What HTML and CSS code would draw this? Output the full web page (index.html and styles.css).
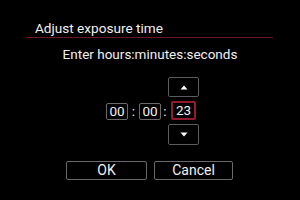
FILE: index.html
```html
<!DOCTYPE html>
<html>
<head>
<meta charset="utf-8">
<link rel="stylesheet" href="styles.css">
</head>
<body>
<div class="screen">
  <div class="title">Adjust exposure time</div>
  <div class="divider"></div>
  <div class="subtitle">Enter hours:minutes:seconds</div>
  <div class="picker">
    <div class="field">00</div>
    <div class="colon">:</div>
    <div class="field">00</div>
    <div class="colon colon-narrow">:</div>
    <div class="seconds">
      <div class="step">
        <svg width="8" height="5" viewBox="0 0 8 5"><polygon points="4,0.5 7.5,4.5 0.5,4.5" fill="#fff"/></svg>
      </div>
      <div class="field field-active">23</div>
      <div class="step step-down">
        <svg width="8" height="5" viewBox="0 0 8 5"><polygon points="0.5,0.5 7.5,0.5 4,4.5" fill="#fff"/></svg>
      </div>
    </div>
  </div>
  <div class="actions">
    <div class="btn btn-ok">OK</div>
    <div class="btn btn-cancel">Cancel</div>
  </div>
</div>
</body>
</html>
```
FILE: styles.css
```css
html, body {
  margin: 0;
  padding: 0;
  background: #000;
}
.screen {
  width: 300px;
  height: 200px;
  background: #000;
  color: #f0f0f0;
  font-family: Roboto, "Open Sans", sans-serif;
  overflow: hidden;
  padding-top: 20px;
  box-sizing: border-box;
}
.title {
  font-size: 13.6px;
  line-height: 17px;
  padding-left: 35px;
}
.divider {
  height: 1px;
  margin: 0 27px 0 26px;
  background: #6e1422;
}
.subtitle {
  margin-top: 8px;
  font-size: 13.5px;
  line-height: 17px;
  text-align: center;
}
.picker {
  margin-top: 14px;
  padding-left: 106px;
  display: flex;
  align-items: center;
}
.field {
  width: 22px;
  height: 17px;
  box-sizing: border-box;
  border: 1px solid #6a6a6a;
  border-radius: 2px;
  font-size: 13.5px;
  line-height: 15px;
  text-align: center;
}
.colon {
  width: 11px;
  text-align: center;
  font-size: 13.5px;
  line-height: 15px;
}
.colon-narrow {
  width: 6px;
  padding-left: 1px;
}
.seconds {
  width: 31px;
  display: flex;
  flex-direction: column;
  align-items: center;
  gap: 4px;
}
.step {
  width: 31px;
  height: 20px;
  box-sizing: border-box;
  border: 1px solid #5c5c5c;
  border-radius: 2px;
  display: flex;
  align-items: center;
  justify-content: center;
}
.step-down {
  height: 21px;
}
.field-active {
  width: 25px;
  height: 19px;
  line-height: 15px;
  border: 2px solid #921b30;
}
.actions {
  margin-top: 16px;
  display: flex;
  justify-content: center;
  gap: 7px;
  padding-right: 1px;
}
.btn {
  height: 19px;
  box-sizing: border-box;
  border: 1px solid #6a6a6a;
  border-radius: 2px;
  font-size: 14px;
  line-height: 17px;
  text-align: center;
}
.btn-ok { width: 81px; }
.btn-cancel { width: 79px; }
```
